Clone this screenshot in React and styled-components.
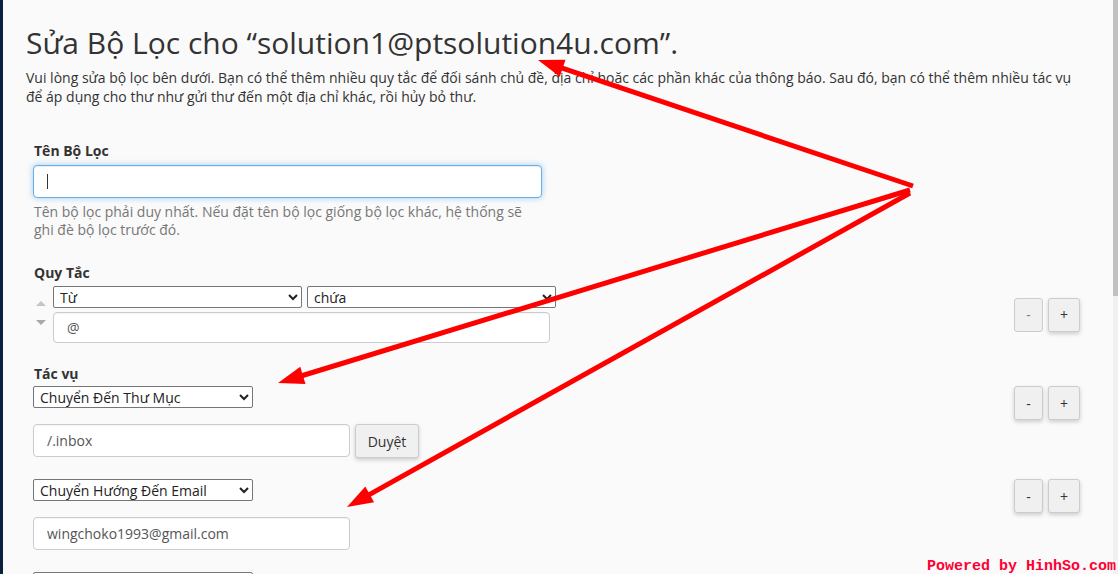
import React from "react";
import styled, { createGlobalStyle } from "styled-components";

const GlobalStyle = createGlobalStyle`
  html, body {
    margin: 0;
    padding: 0;
    background: #fafafa;
    overflow: hidden;
  }
  * {
    box-sizing: border-box;
  }
`;

const Root = styled.div`
  position: relative;
  display: flex;
  width: 1118px;
  height: 574px;
  overflow: hidden;
`;

const Main = styled.div`
  flex: 1;
  height: 574px;
  overflow: hidden;
  background: #fafafa;
  border-left: 3px solid #0c1f3f;
  font-family: "Open Sans", "Liberation Sans", sans-serif;
  color: #333;
`;

const ScrollTrack = styled.div`
  width: 5px;
  height: 574px;
  background: #f1f1f1;
`;

const ScrollThumb = styled.div`
  height: 296px;
  background: #c1c1c1;
`;

const Content = styled.div`
  padding: 26px 28px 0 23px;
`;

const Title = styled.h1`
  margin: 0;
  font-size: 30px;
  font-weight: 400;
  line-height: 33px;
  color: #333;
`;

const Intro = styled.p`
  margin: 9px 0 0;
  font-size: 14px;
  line-height: 19px;
`;

const Form = styled.div`
  padding: 35px 5px 0 7px;
`;

const Group = styled.div`
  margin-bottom: ${(p) => p.$gap || 0}px;
`;

const Label = styled.div`
  font-size: 14px;
  font-weight: 700;
  line-height: 20px;
  padding-left: 1px;
  margin-bottom: ${(p) => p.$gap ?? 3}px;
`;

const TextInput = styled.input`
  display: block;
  width: ${(p) => p.$width}px;
  height: ${(p) => p.$height || 33}px;
  padding: 0 13px;
  border: 1px solid ${(p) => (p.$focus ? "#66afe9" : "#ccc")};
  border-radius: 4px;
  background: #fff;
  font-family: "Open Sans", "Liberation Sans", sans-serif;
  font-size: 14px;
  color: #555;
  outline: none;
  box-shadow: ${(p) =>
    p.$focus
      ? "inset 0 1px 1px rgba(0,0,0,.075), 0 0 6px rgba(102,175,233,.6)"
      : "inset 0 1px 1px rgba(0,0,0,.04)"};
`;

const FocusWrap = styled.div`
  position: relative;
  width: 509px;
  margin-top: 1px;
  &::after {
    content: "";
    position: absolute;
    left: 14px;
    top: 9px;
    width: 1px;
    height: 15px;
    background: #333;
  }
`;

const Help = styled.div`
  width: 509px;
  margin-top: 5px;
  padding-left: 1px;
  font-size: 14px;
  line-height: 18px;
  color: #777;
`;

const Select = styled.select`
  display: block;
  width: ${(p) => p.$width}px;
  height: 22px;
  padding: 0 2px;
  border: 1px solid #767676;
  border-radius: 2px;
  background: #fff;
  font-family: "Open Sans", "Liberation Sans", sans-serif;
  font-size: 14px;
  color: #222;
`;

const SpaceRow = styled.div`
  display: flex;
  justify-content: space-between;
  align-items: ${(p) => p.$align || "flex-start"};
`;

const RuleBlock = styled.div`
  display: flex;
  align-items: flex-start;
  gap: 4px;
`;

const Sorter = styled.div`
  width: 16px;
  display: flex;
  flex-direction: column;
  align-items: center;
  gap: 14px;
  padding-top: 15px;
`;

const Tri = styled.span`
  width: 0;
  height: 0;
  border-left: 5px solid transparent;
  border-right: 5px solid transparent;
  ${(p) =>
    p.$down
      ? "border-top: 5px solid #a8a8a8;"
      : "border-bottom: 5px solid #c4c4c4;"}
`;

const RuleFields = styled.div`
  display: flex;
  flex-direction: column;
  gap: 4px;
`;

const SelectPair = styled.div`
  display: flex;
  gap: 5px;
`;

const BtnPair = styled.div`
  display: flex;
  gap: 5px;
`;

const Btn = styled.button`
  width: ${(p) => p.$width || 32}px;
  height: 34px;
  padding: 0;
  border: 1px solid #ccc;
  border-radius: 3px;
  background: #f0f0f0;
  font-family: "Open Sans", "Liberation Sans", sans-serif;
  font-size: 14px;
  color: ${(p) => (p.$muted ? "#9a7a5a" : "#333")};
  box-shadow: ${(p) => (p.$muted ? "none" : "0 2px 4px rgba(0,0,0,.18)")};
`;

const FieldRow = styled.div`
  display: flex;
  gap: 5px;
  margin-top: 4px;
`;

const Watermark = styled.div`
  position: absolute;
  right: 2px;
  bottom: 0;
  font-family: "Liberation Mono", "DejaVu Sans Mono", monospace;
  font-weight: 700;
  font-size: 15px;
  line-height: 14px;
  color: #ff0033;
`;

const ArrowLayer = styled.svg`
  position: absolute;
  left: 0;
  top: 0;
  pointer-events: none;
`;

const arrows = [
  { from: [913, 186], to: [538, 60] },
  { from: [910, 190], to: [278, 383] },
  { from: [910, 193], to: [347, 507] },
];

const Arrow = ({ from, to }) => {
  const dx = to[0] - from[0];
  const dy = to[1] - from[1];
  const len = Math.hypot(dx, dy);
  const ux = dx / len;
  const uy = dy / len;
  const bx = to[0] - ux * 26;
  const by = to[1] - uy * 26;
  const px = -uy * 9;
  const py = ux * 9;
  const pts = `${to[0]},${to[1]} ${bx + px},${by + py} ${bx - px},${by - py}`;
  return (
    <g>
      <line x1={from[0]} y1={from[1]} x2={bx + ux * 2} y2={by + uy * 2} stroke="#ff0000" strokeWidth="5" />
      <polygon points={pts} fill="#ff0000" />
    </g>
  );
};

const ActionItem = ({ option, value, browse, gap }) => (
  <Group $gap={gap}>
    <SpaceRow>
      <Select $width={220} defaultValue={option}>
        <option>{option}</option>
      </Select>
      <BtnPair>
        <Btn $width={29}>-</Btn>
        <Btn>+</Btn>
      </BtnPair>
    </SpaceRow>
    <FieldRow>
      <TextInput $width={317} readOnly defaultValue={value} />
      {browse && <Btn $width={64}>Duyệt</Btn>}
    </FieldRow>
  </Group>
);

export default function App() {
  return (
    <Root>
      <GlobalStyle />
      <Main>
        <Content>
          <Title>Sửa Bộ Lọc cho “solution1@ptsolution4u.com”.</Title>
          <Intro>
            Vui lòng sửa bộ lọc bên dưới. Bạn có thể thêm nhiều quy tắc để đối sánh chủ đề, địa chỉ hoặc các phần
            khác của thông báo. Sau đó, bạn có thể thêm nhiều tác vụ để áp dụng cho thư như gửi thư đến một địa chỉ
            khác, rồi hủy bỏ thư.
          </Intro>
          <Form>
            <Group $gap={24}>
              <Label $gap={4}>Tên Bộ Lọc</Label>
              <FocusWrap>
                <TextInput $width={509} $focus readOnly defaultValue="" />
              </FocusWrap>
              <Help>
                Tên bộ lọc phải duy nhất. Nếu đặt tên bộ lọc giống bộ lọc khác, hệ thống sẽ ghi đè bộ lọc trước đó.
              </Help>
            </Group>
            <Group $gap={21}>
              <Label>Quy Tắc</Label>
              <SpaceRow $align="center">
                <RuleBlock>
                  <Sorter>
                    <Tri />
                    <Tri $down />
                  </Sorter>
                  <RuleFields>
                    <SelectPair>
                      <Select $width={249} defaultValue="Từ">
                        <option>Từ</option>
                      </Select>
                      <Select $width={249} defaultValue="chứa">
                        <option>chứa</option>
                      </Select>
                    </SelectPair>
                    <TextInput $width={497} $height={31} readOnly defaultValue="@" />
                  </RuleFields>
                </RuleBlock>
                <BtnPair>
                  <Btn $width={29} $muted>
                    -
                  </Btn>
                  <Btn>+</Btn>
                </BtnPair>
              </SpaceRow>
            </Group>
            <Label $gap={2}>Tác vụ</Label>
            <ActionItem option="Chuyển Đến Thư Mục" value="/.inbox" browse gap={21} />
            <ActionItem option="Chuyển Hướng Đến Email" value="wingchoko1993@gmail.com" gap={22} />
            <Select $width={220} defaultValue="Hủy Thư">
              <option>Hủy Thư</option>
            </Select>
          </Form>
        </Content>
      </Main>
      <ScrollTrack>
        <ScrollThumb />
      </ScrollTrack>
      <ArrowLayer width="1118" height="574" viewBox="0 0 1118 574">
        {arrows.map((a, i) => (
          <Arrow key={i} {...a} />
        ))}
      </ArrowLayer>
      <Watermark>Powered by HinhSo.com</Watermark>
    </Root>
  );
}
